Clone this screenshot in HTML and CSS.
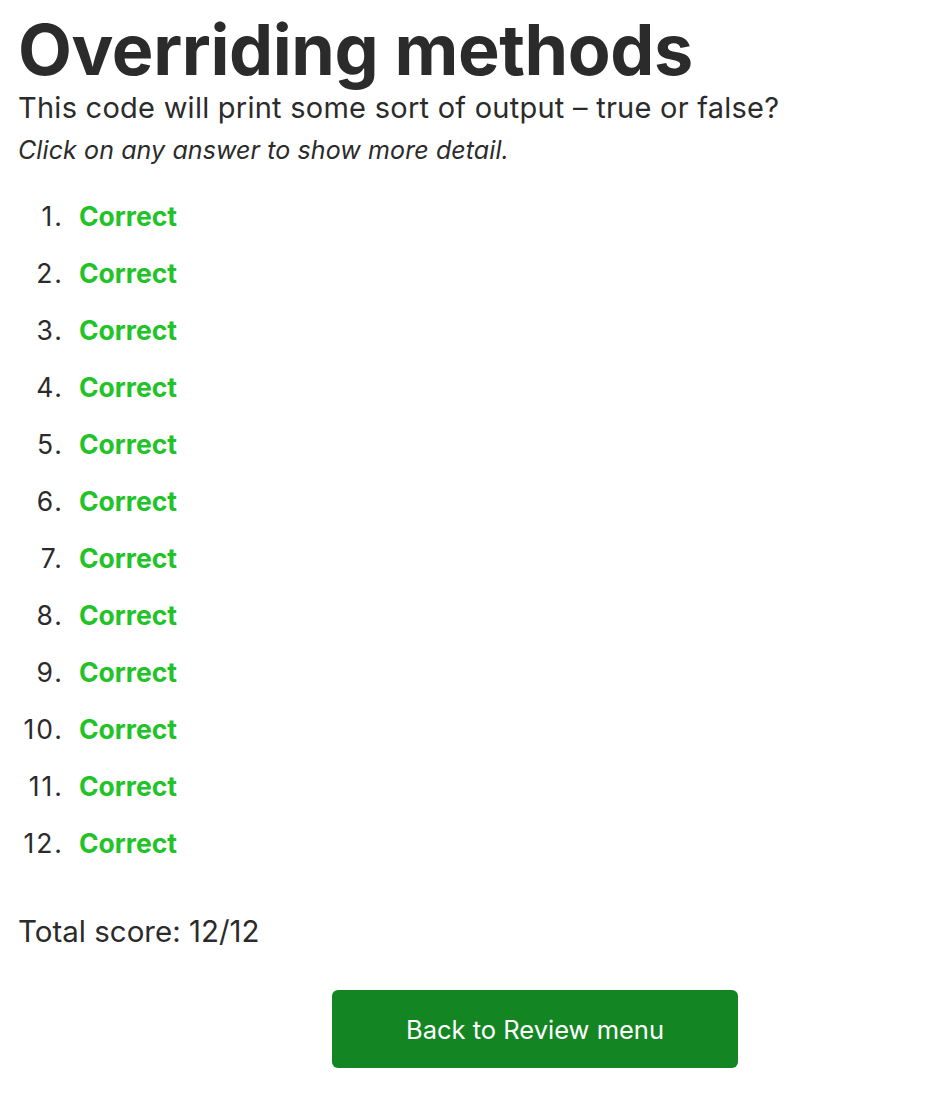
FILE: index.html
```html
<!DOCTYPE html>
<html>
<head>
<meta charset="utf-8">
<link rel="stylesheet" href="styles.css">
</head>
<body>
<main class="page">
  <h1 class="title">Overriding methods</h1>
  <p class="subtitle">This code will print some sort of output – true or false?</p>
  <p class="hint">Click on any answer to show more detail.</p>
  <ol class="answers">
    <li><span class="num">1.</span><span class="correct">Correct</span></li>
    <li><span class="num">2.</span><span class="correct">Correct</span></li>
    <li><span class="num">3.</span><span class="correct">Correct</span></li>
    <li><span class="num">4.</span><span class="correct">Correct</span></li>
    <li><span class="num">5.</span><span class="correct">Correct</span></li>
    <li><span class="num">6.</span><span class="correct">Correct</span></li>
    <li><span class="num">7.</span><span class="correct">Correct</span></li>
    <li><span class="num">8.</span><span class="correct">Correct</span></li>
    <li><span class="num">9.</span><span class="correct">Correct</span></li>
    <li><span class="num">10.</span><span class="correct">Correct</span></li>
    <li><span class="num">11.</span><span class="correct">Correct</span></li>
    <li><span class="num">12.</span><span class="correct">Correct</span></li>
  </ol>
  <p class="score">Total score: 12/12</p>
  <div class="actions">
    <button class="back-btn">Back to Review menu</button>
  </div>
</main>
</body>
</html>
```

FILE: styles.css
```css
html, body {
  margin: 0;
  padding: 0;
  background: #ffffff;
}
body {
  font-family: "Inter", "Noto Sans", sans-serif;
  color: #2b2b2b;
}
.page {
  padding: 10px 18px 0 18px;
}
.title {
  margin: 0;
  font-size: 70px;
  font-weight: 700;
  line-height: 80px;
  letter-spacing: -0.4px;
}
.subtitle {
  margin: 0;
  font-size: 29px;
  line-height: 36px;
  letter-spacing: 0.25px;
}
.hint {
  margin: 8px 0 0 0;
  font-size: 25px;
  font-style: italic;
  line-height: 32px;
  letter-spacing: 0.1px;
}
.answers {
  list-style: none;
  margin: 34px 0 0 0;
  padding: 0;
  display: flex;
  flex-direction: column;
  gap: 25px;
}
.answers li {
  display: flex;
  align-items: baseline;
  font-size: 26.5px;
  line-height: 32px;
}
.num {
  width: 46px;
  text-align: right;
  margin-right: 15px;
  letter-spacing: 2px;
}
.correct {
  color: #22c328;
  font-weight: 700;
}
.score {
  margin: 54px 0 0 0;
  font-size: 29.5px;
  line-height: 36px;
}
.actions {
  display: flex;
  padding-left: 314px;
  margin-top: 41px;
}
.back-btn {
  width: 406px;
  height: 78px;
  border: none;
  border-radius: 6px;
  background: #138623;
  color: #ffffff;
  font-family: "Inter", "Noto Sans", sans-serif;
  font-size: 25.5px;
  font-weight: 400;
  cursor: pointer;
}
```
